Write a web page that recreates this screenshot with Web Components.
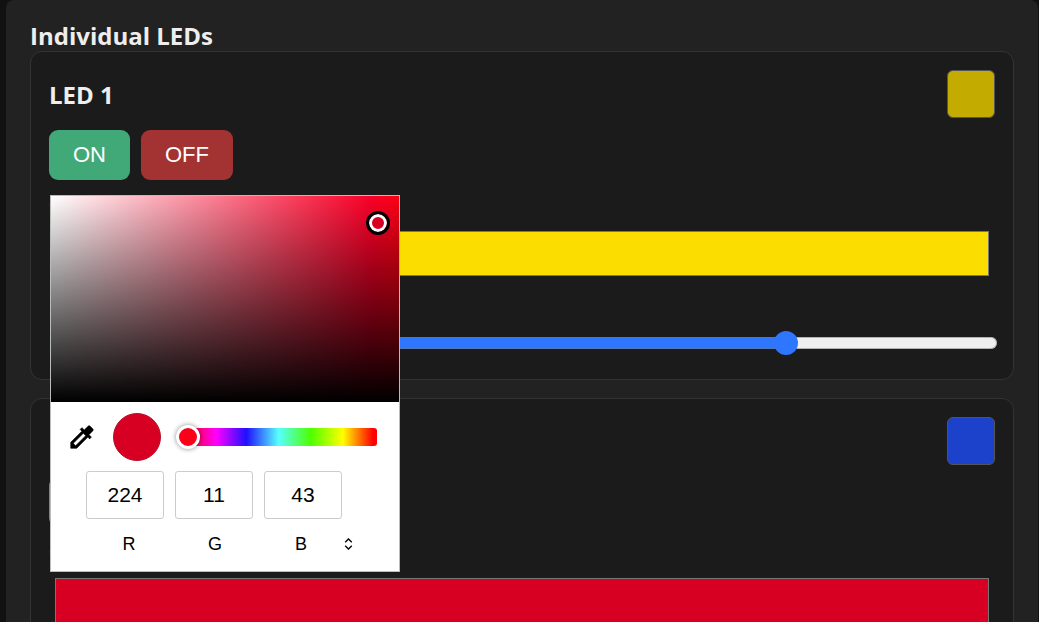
<!DOCTYPE html>
<html lang="en">
<head>
<meta charset="UTF-8">
<meta name="viewport" content="width=device-width, initial-scale=1">
<title>LED Control</title>
<style>
    body {
        margin: 0;
        height: 100vh;
        overflow: hidden;
        padding: 0 1px 0 6px;
        box-sizing: border-box;
        background: #111;
        color: #eee;
        font-family: "Open Sans", "Noto Sans", sans-serif;
    }
</style>
</head>
<body>
    <led-panel heading="Individual LEDs">
        <led-card name="LED 1" color="#fbdd00" preview="#c4ab00" brightness="200">
            <color-popup slot="popup" red="224" green="11" blue="43"></color-popup>
        </led-card>
        <led-card name="LED 2" color="#d70022" preview="#1c42cc" brightness="200"></led-card>
    </led-panel>

<script>
class LedPanel extends HTMLElement {
    constructor() {
        super();
        const shadow = this.attachShadow({ mode: 'open' });

        shadow.innerHTML = `
            <style>
                :host {
                    display: block;
                    background: #222;
                    border-radius: 8px;
                    padding: 20px 24px;
                }

                h2 {
                    margin: 0;
                    font-size: 24px;
                    line-height: 31px;
                    font-weight: 700;
                }

                .cards {
                    display: flex;
                    flex-direction: column;
                    gap: 18px;
                }
            </style>

            <h2></h2>
            <div class="cards"><slot></slot></div>
        `;

        shadow.querySelector('h2').textContent = this.getAttribute('heading');
    }
}

class LedCard extends HTMLElement {
    constructor() {
        super();
        const shadow = this.attachShadow({ mode: 'open' });

        shadow.innerHTML = `
            <style>
                :host {
                    display: block;
                    position: relative;
                    background: #1b1b1b;
                    border: 1px solid #333;
                    border-radius: 12px;
                    padding: 18px;
                }

                .header {
                    display: flex;
                    align-items: center;
                    justify-content: space-between;
                }

                h3 {
                    margin: 0;
                    font-size: 24px;
                    line-height: 31px;
                    font-weight: 700;
                }

                .preview {
                    width: 48px;
                    height: 48px;
                    box-sizing: border-box;
                    border: 1px solid #555;
                    border-radius: 6px;
                }

                .actions {
                    display: flex;
                    gap: 11px;
                    margin: 12px 0;
                }

                button {
                    height: 50px;
                    padding: 0 24px;
                    border: none;
                    border-radius: 9px;
                    color: #fff;
                    font: 22px "Liberation Sans", sans-serif;
                    cursor: pointer;
                }

                .on {
                    background: #41a978;
                }

                .off {
                    background: #a33232;
                }

                label {
                    display: block;
                    font-size: 20px;
                    line-height: 26px;
                }

                input[type="color"] {
                    display: block;
                    width: 100%;
                    height: 55px;
                    margin: 8px 0 12px;
                    padding: 0;
                    border: none;
                    background: none;
                    cursor: pointer;
                }

                input[type="color"]::-webkit-color-swatch-wrapper {
                    padding: 5px 6px;
                }

                input[type="color"]::-webkit-color-swatch {
                    border: 1px solid #767676;
                    border-radius: 0;
                }

                .range {
                    -webkit-appearance: none;
                    appearance: none;
                    display: block;
                    width: 100%;
                    height: 24px;
                    margin: 12px 2px 6px;
                    background: none;
                }

                .range::-webkit-slider-runnable-track {
                    height: 12px;
                    box-sizing: border-box;
                    border-radius: 6px;
                    background: linear-gradient(to right, #2f76ff var(--fill), #efefef var(--fill));
                    box-shadow: inset 0 0 0 1px rgba(118, 118, 118, 0.5);
                }

                .range::-webkit-slider-thumb {
                    -webkit-appearance: none;
                    width: 24px;
                    height: 24px;
                    margin-top: -6px;
                    border-radius: 50%;
                    background: #2f76ff;
                }
            </style>

            <div class="header">
                <h3></h3>
                <div class="preview"></div>
            </div>
            <div class="actions">
                <button class="on" type="button">ON</button>
                <button class="off" type="button">OFF</button>
            </div>
            <label for="color">Color</label>
            <input id="color" type="color">
            <label for="brightness">Brightness</label>
            <input id="brightness" class="range" type="range" min="0" max="255">
            <slot name="popup"></slot>
        `;

        shadow.querySelector('h3').textContent = this.getAttribute('name');
        shadow.querySelector('.preview').style.background = this.getAttribute('preview');
        shadow.getElementById('color').value = this.getAttribute('color');
        shadow.getElementById('brightness').value = this.getAttribute('brightness');

        this.setupEventListeners();
        this.updateFill();
    }

    setupEventListeners() {
        const root = this.shadowRoot;
        const preview = root.querySelector('.preview');

        root.getElementById('brightness').addEventListener('input', () => this.updateFill());
        root.getElementById('color').addEventListener('input', (e) => {
            preview.style.background = e.target.value;
        });
        root.querySelector('.on').addEventListener('click', () => {
            this.dispatchEvent(new CustomEvent('led-power', { detail: { on: true }, bubbles: true }));
        });
        root.querySelector('.off').addEventListener('click', () => {
            this.dispatchEvent(new CustomEvent('led-power', { detail: { on: false }, bubbles: true }));
        });
    }

    updateFill() {
        const range = this.shadowRoot.getElementById('brightness');
        range.style.setProperty('--fill', (range.value / range.max * 100) + '%');
    }
}

class ColorPopup extends HTMLElement {
    constructor() {
        super();
        const shadow = this.attachShadow({ mode: 'open' });

        shadow.innerHTML = `
            <style>
                /* floats over the card's fields */
                :host {
                    display: block;
                    position: absolute;
                    z-index: 10;
                    left: 19px;
                    top: 143px;
                    width: 350px;
                    box-sizing: border-box;
                    padding-bottom: 15px;
                    border: 1px solid #bbb;
                    background: #fff;
                    color: #000;
                    font-family: "Liberation Sans", sans-serif;
                }

                .field {
                    position: relative;
                    height: 206px;
                    background:
                        linear-gradient(to top, #000, transparent),
                        linear-gradient(to right, #fff, #fa0028 92%, #fa0014);
                }

                .handle {
                    position: absolute;
                    left: 94%;
                    top: 13%;
                    width: 24px;
                    height: 24px;
                    margin: -12px;
                    box-sizing: border-box;
                    border: 3px solid #000;
                    border-radius: 50%;
                    background: #d70022;
                    box-shadow: inset 0 0 0 3px #fff;
                }

                .controls {
                    display: flex;
                    align-items: center;
                    padding: 11px 22px 10px 19px;
                }

                button {
                    display: flex;
                    padding: 0;
                    border: none;
                    background: none;
                    color: inherit;
                    cursor: pointer;
                }

                .current {
                    width: 48px;
                    height: 48px;
                    margin: 0 15px 0 19px;
                    box-sizing: border-box;
                    border: 1px solid #b5102b;
                    border-radius: 50%;
                    background: #d70022;
                }

                .hue {
                    -webkit-appearance: none;
                    appearance: none;
                    flex: 1;
                    min-width: 0;
                    height: 24px;
                    margin: 0;
                    background: none;
                }

                /* the track starts under the thumb */
                .hue::-webkit-slider-runnable-track {
                    height: 18px;
                    border-radius: 3px;
                    background: linear-gradient(to right, transparent 8px, #f00 8px, #f0f 20%, #1f10ff 35%, #56ffff 51%, #4dff00 67%, #ff0 83%, #f00 98%);
                }

                .hue::-webkit-slider-thumb {
                    -webkit-appearance: none;
                    width: 24px;
                    height: 24px;
                    margin-top: -3px;
                    box-sizing: border-box;
                    border: 3px solid #fff;
                    border-radius: 50%;
                    background: #fb0019;
                    box-shadow: 0 0 5px rgba(0, 0, 0, 0.45);
                }

                .values {
                    display: flex;
                    gap: 11px;
                    padding-left: 35px;
                }

                .values input {
                    width: 78px;
                    height: 48px;
                    box-sizing: border-box;
                    padding: 0;
                    border: 1px solid #ccc;
                    border-radius: 3px;
                    background: #fff;
                    color: #000;
                    font: 21px "Liberation Sans", sans-serif;
                    text-align: center;
                }

                .names {
                    display: flex;
                    align-items: center;
                    margin-top: 13px;
                    padding-left: 35px;
                }

                .names label {
                    width: 86px;
                    font-size: 18px;
                    line-height: 24px;
                    text-align: center;
                }
            </style>

            <div class="field"><div class="handle"></div></div>
            <div class="controls">
                <button type="button" aria-label="Pick a color from the screen">
                    <svg width="24" height="24" viewBox="2.4 2.4 19.2 19.2">
                        <path fill="currentColor" stroke="currentColor" stroke-width=".5" d="M20.71 5.63l-2.34-2.34c-.39-.39-1.02-.39-1.41 0l-3.12 3.12-1.93-1.91-1.41 1.41 1.42 1.42L3 16.25V21h4.75l8.92-8.92 1.42 1.42 1.41-1.41-1.92-1.92 3.12-3.12c.4-.4.4-1.03.01-1.42zM6.92 19L5 17.08l8.06-8.06 1.92 1.92L6.92 19z"/>
                    </svg>
                </button>
                <div class="current"></div>
                <input class="hue" type="range" min="0" max="360" value="0" aria-label="Hue">
            </div>
            <div class="values">
                <input id="red" type="text">
                <input id="green" type="text">
                <input id="blue" type="text">
            </div>
            <div class="names">
                <label for="red">R</label>
                <label for="green">G</label>
                <label for="blue">B</label>
                <button type="button" aria-label="Change color format">
                    <svg width="9" height="12" viewBox="0 0 9 12" fill="none" stroke="currentColor" stroke-width="1.3">
                        <path d="M1.2 4.2 4.5 1l3.3 3.2M1.2 7.800 4.500 11l3.300-3.200"/>
                    </svg>
                </button>
            </div>
        `;

        for (const channel of ['red', 'green', 'blue']) {
            shadow.getElementById(channel).value = this.getAttribute(channel);
        }
    }
}

customElements.define('led-panel', LedPanel);
customElements.define('led-card', LedCard);
customElements.define('color-popup', ColorPopup);
</script>
</body>
</html>
